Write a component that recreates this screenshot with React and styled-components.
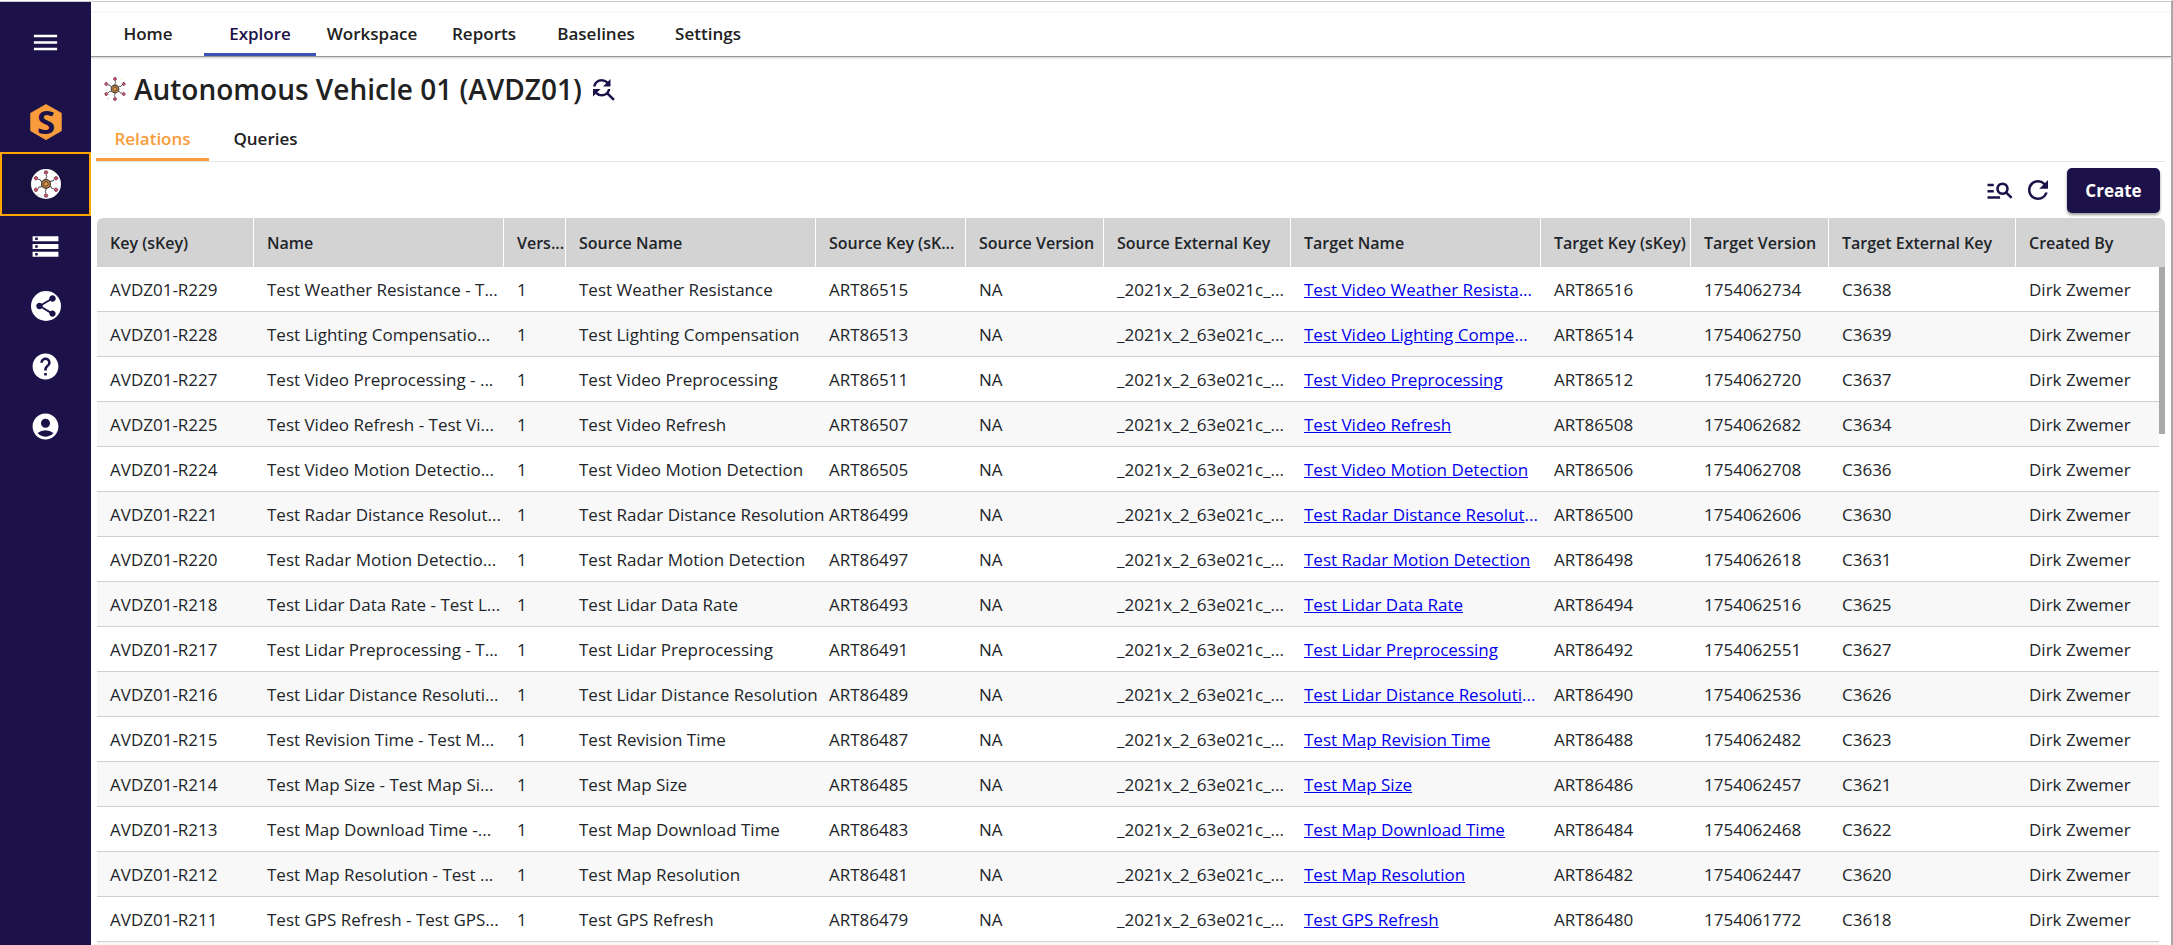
import styled, { createGlobalStyle } from "styled-components";
import {
  MdAccountCircle,
  MdFindReplace,
  MdHelp,
  MdManageSearch,
  MdMenu,
  MdRefresh,
  MdShare,
  MdStorage,
} from "react-icons/md";

const navy = "#1c1249";
const orange = "#f89c3c";

const GlobalStyle = createGlobalStyle`
  * {
    box-sizing: border-box;
  }
  body {
    margin: 0;
    background-color: white;
    color: #212529;
    font-family: "Segoe UI", "Open Sans", "Noto Sans", sans-serif;
    font-size: 17px;
  }
`;

const Container = styled.div`
  display: flex;
  height: 100vh;
  overflow: hidden;
  border-top: 1px solid white;
  border-right: 2px solid #a8a8a8;
`;

const Sidebar = styled.aside`
  width: 91px;
  flex-shrink: 0;
  display: flex;
  flex-direction: column;
  align-items: center;
  border-top: 1px solid #ccc;
  background-color: ${navy};
`;

const MenuButton = styled.button`
  width: 100%;
  height: 80px;
  display: flex;
  align-items: center;
  justify-content: center;
  border: none;
  background: none;
  color: white;
  cursor: pointer;
`;

const SideLinks = styled.nav`
  width: 100%;
  margin-top: 10px;
`;

const SideLink = styled.a`
  height: ${(props) => (props.$active ? "64px" : "60px")};
  display: flex;
  align-items: center;
  justify-content: center;
  color: white;
  background-color: ${(props) => (props.$active ? "#19113f" : "transparent")};
  border: 2px solid ${(props) => (props.$active ? "orange" : "transparent")};
`;

const Badge = styled.span`
  width: 30px;
  height: 30px;
  display: flex;
  align-items: center;
  justify-content: center;
  border-radius: 50%;
  background-color: white;
  color: ${navy};
`;

const Main = styled.main`
  flex: 1;
  min-width: 0;
  display: flex;
  flex-direction: column;
  border-top: 1px solid #ccc;
`;

const TopNav = styled.nav`
  display: flex;
  margin-top: 10px;
  height: 45px;
  padding-left: 1px;
  border-top: 1px solid #f6f6f6;
  border-bottom: 1px solid #999;
  box-shadow: 0 1px 2px rgba(0, 0, 0, 0.2);
`;

const TopLink = styled.a`
  min-width: 112px;
  padding: 0 10px;
  display: flex;
  align-items: center;
  justify-content: center;
  font-weight: 600;
  text-decoration: none;
  color: ${(props) => (props.$active ? navy : "#212121")};
  border-bottom: 3px solid
    ${(props) => (props.$active ? "#3f51b5" : "transparent")};
`;

const TitleRow = styled.div`
  height: 66px;
  display: flex;
  align-items: center;
  gap: 6px;
  padding: 0 0 2px 11px;
`;

const Title = styled.h1`
  margin: 0;
  font-size: 28px;
  line-height: 40px;
  font-weight: 600;
  color: #212121;
`;

const IconButton = styled.button`
  display: flex;
  padding: 0;
  border: none;
  background: none;
  color: ${navy};
  cursor: pointer;
`;

const Tabs = styled.div`
  display: flex;
  height: 39px;
  margin: 0 6px 0 5px;
  border-bottom: 1px solid #e6e6e6;
`;

const Tab = styled.button`
  min-width: 113px;
  padding: 0 0 4px;
  border: none;
  border-bottom: 3px solid
    ${(props) => (props.$active ? orange : "transparent")};
  background: none;
  color: ${(props) => (props.$active ? orange : "#212121")};
  font: inherit;
  font-weight: 600;
  cursor: pointer;
`;

const Toolbar = styled.div`
  display: flex;
  align-items: center;
  justify-content: flex-end;
  gap: 8px;
  height: 56px;
  padding-right: 11px;
`;

const CreateButton = styled.button`
  width: 93px;
  height: 45px;
  margin-left: 6px;
  border: none;
  border-radius: 5px;
  background-color: ${navy};
  color: white;
  font: inherit;
  font-weight: 700;
  box-shadow: 0 2px 3px rgba(0, 0, 0, 0.4);
  cursor: pointer;
`;

const TablePanel = styled.section`
  flex: 1;
  min-height: 0;
  position: relative;
  overflow: hidden;
  margin: 0 6px;
  border-radius: 6px 6px 0 0;
  background-color: #f8f8f8;
`;

const Table = styled.table`
  width: 100%;
  table-layout: fixed;
  border-collapse: separate;
  border-spacing: 0;
`;

const Th = styled.th`
  width: ${(props) => props.$width};
  height: 49px;
  padding: 0 0 0 13px;
  white-space: nowrap;
  text-align: left;
  font-size: 16px;
  font-weight: 600;
  background-color: #d3d3d3;
  border-right: 1px solid white;
  &:last-child {
    border-right: none;
  }
`;

const Tr = styled.tr`
  background-color: white;
  &:nth-child(even) {
    background-color: #f8f8f8;
  }
`;

const Td = styled.td`
  height: 45px;
  padding: 0 0 0 13px;
  white-space: nowrap;
  border-bottom: 1px solid #d0d0d0;
`;

const TableLink = styled.a`
  color: #0000ee;
`;

const LinkCell = styled(Td)`
  color: #0000ee;
`;

const ScrollTrack = styled.div`
  position: absolute;
  top: 49px;
  right: 0;
  bottom: 0;
  width: 6px;
  background-color: white;
`;

const ScrollThumb = styled.div`
  height: 167px;
  background-color: #a8a8a8;
`;

const spokes = [0, 60, 120, 180, 240, 300];

const HubIcon = ({ size }) => (
  <svg width={size} height={size} viewBox="0 0 30 30" aria-hidden="true">
    {spokes.map((angle) => (
      <g key={angle} transform={`rotate(${angle} 15 15)`}>
        <path d="M15 11V9l.8-1.4-.8-2" stroke="#4a4a55" strokeWidth="1" fill="none" />
        <circle cx="15" cy="3.4" r="1.7" fill="#d9536f" stroke="#5f3340" strokeWidth="0.8" />
      </g>
    ))}
    <circle cx="15" cy="15" r="4.4" fill="#b98a55" stroke="#4d3a2a" strokeWidth="1.3" />
    <circle cx="15" cy="15" r="2.2" fill="#f0a050" stroke="#5b3d22" strokeWidth="1" />
    <circle cx="22.5" cy="3.8" r="0.6" fill="#f8d66a" />
    <circle cx="25" cy="14.6" r="0.5" fill="#f2a6a6" />
    <circle cx="7" cy="26" r="0.8" fill="#8ee07c" />
  </svg>
);

const LogoSvg = styled.svg`
  overflow: visible;
`;

const LogoLetter = styled.text`
  font-size: 33px;
  font-weight: 700;
  fill: ${navy};
`;

const LogoIcon = () => (
  <LogoSvg width="32" height="36" viewBox="0 0 32 36" aria-hidden="true">
    <path
      d="M16 0.6L31.2 9.2V26.8L16 35.6L0.8 26.8V9.2Z"
      fill={orange}
      stroke={orange}
      strokeLinejoin="round"
    />
    <LogoLetter x="16" y="30" textAnchor="middle">
      S
    </LogoLetter>
  </LogoSvg>
);

const topLinks = ["Home", "Explore", "Workspace", "Reports", "Baselines", "Settings"];

const columns = [
  { label: "Key (sKey)", width: "157px" },
  { label: "Name", width: "250px" },
  { label: "Vers...", width: "62px" },
  { label: "Source Name", width: "250px" },
  { label: "Source Key (sK...", width: "150px" },
  { label: "Source Version", width: "138px" },
  { label: "Source External Key", width: "187px" },
  { label: "Target Name", width: "250px" },
  { label: "Target Key (sKey)", width: "150px" },
  { label: "Target Version", width: "138px" },
  { label: "Target External Key", width: "187px" },
  { label: "Created By", width: "auto" },
];

// key, name, source name, source art no., target name, target version, target external key
const relations = [
  ["R229", "Test Weather Resistance - T...", "Test Weather Resistance", 86515, "Test Video Weather Resista...", "1754062734", "C3638"],
  ["R228", "Test Lighting Compensatio...", "Test Lighting Compensation", 86513, "Test Video Lighting Compe...", "1754062750", "C3639"],
  ["R227", "Test Video Preprocessing - ...", "Test Video Preprocessing", 86511, "Test Video Preprocessing", "1754062720", "C3637"],
  ["R225", "Test Video Refresh - Test Vi...", "Test Video Refresh", 86507, "Test Video Refresh", "1754062682", "C3634"],
  ["R224", "Test Video Motion Detectio...", "Test Video Motion Detection", 86505, "Test Video Motion Detection", "1754062708", "C3636"],
  ["R221", "Test Radar Distance Resolut...", "Test Radar Distance Resolution", 86499, "Test Radar Distance Resolut...", "1754062606", "C3630"],
  ["R220", "Test Radar Motion Detectio...", "Test Radar Motion Detection", 86497, "Test Radar Motion Detection", "1754062618", "C3631"],
  ["R218", "Test Lidar Data Rate - Test L...", "Test Lidar Data Rate", 86493, "Test Lidar Data Rate", "1754062516", "C3625"],
  ["R217", "Test Lidar Preprocessing - T...", "Test Lidar Preprocessing", 86491, "Test Lidar Preprocessing", "1754062551", "C3627"],
  ["R216", "Test Lidar Distance Resoluti...", "Test Lidar Distance Resolution", 86489, "Test Lidar Distance Resoluti...", "1754062536", "C3626"],
  ["R215", "Test Revision Time - Test M...", "Test Revision Time", 86487, "Test Map Revision Time", "1754062482", "C3623"],
  ["R214", "Test Map Size - Test Map Si...", "Test Map Size", 86485, "Test Map Size", "1754062457", "C3621"],
  ["R213", "Test Map Download Time -...", "Test Map Download Time", 86483, "Test Map Download Time", "1754062468", "C3622"],
  ["R212", "Test Map Resolution - Test ...", "Test Map Resolution", 86481, "Test Map Resolution", "1754062447", "C3620"],
  ["R211", "Test GPS Refresh - Test GPS...", "Test GPS Refresh", 86479, "Test GPS Refresh", "1754061772", "C3618"],
];

const App = () => {
  return (
    <>
      <GlobalStyle />
      <Container>
        <Sidebar>
          <MenuButton aria-label="Menu">
            <MdMenu size={31} />
          </MenuButton>
          <SideLinks>
            <SideLink href="#" aria-label="Start">
              <LogoIcon />
            </SideLink>
            <SideLink href="#" aria-label="Network" $active>
              <Badge>
                <HubIcon size={30} />
              </Badge>
            </SideLink>
            <SideLink href="#" aria-label="Repositories">
              <MdStorage size={31} />
            </SideLink>
            <SideLink href="#" aria-label="Share">
              <Badge>
                <MdShare size={26} />
              </Badge>
            </SideLink>
            <SideLink href="#" aria-label="Help">
              <MdHelp size={31} />
            </SideLink>
            <SideLink href="#" aria-label="Account">
              <MdAccountCircle size={31} />
            </SideLink>
          </SideLinks>
        </Sidebar>
        <Main>
          <TopNav>
            {topLinks.map((label) => (
              <TopLink href="#" key={label} $active={label === "Explore"}>
                {label}
              </TopLink>
            ))}
          </TopNav>
          <TitleRow>
            <HubIcon size={26} />
            <Title>Autonomous Vehicle 01 (AVDZ01)</Title>
            <IconButton aria-label="Find and replace">
              <MdFindReplace size={30} />
            </IconButton>
          </TitleRow>
          <Tabs role="tablist">
            <Tab role="tab" aria-selected="true" $active>
              Relations
            </Tab>
            <Tab role="tab" aria-selected="false">
              Queries
            </Tab>
          </Tabs>
          <Toolbar>
            <IconButton aria-label="Search">
              <MdManageSearch size={30} />
            </IconButton>
            <IconButton aria-label="Refresh">
              <MdRefresh size={30} />
            </IconButton>
            <CreateButton>Create</CreateButton>
          </Toolbar>
          <TablePanel>
            <Table>
              <thead>
                <tr>
                  {columns.map(({ label, width }) => (
                    <Th key={label} scope="col" $width={width}>
                      {label}
                    </Th>
                  ))}
                </tr>
              </thead>
              <tbody>
                {relations.map(([key, name, source, art, target, version, external]) => (
                  <Tr key={key}>
                    <Td>AVDZ01-{key}</Td>
                    <Td>{name}</Td>
                    <Td>1</Td>
                    <Td>{source}</Td>
                    <Td>ART{art}</Td>
                    <Td>NA</Td>
                    <Td>_2021x_2_63e021c_...</Td>
                    <LinkCell>
                      <TableLink href="#">{target.replace("...", "")}</TableLink>
                      {target.endsWith("...") && "..."}
                    </LinkCell>
                    <Td>ART{art + 1}</Td>
                    <Td>{version}</Td>
                    <Td>{external}</Td>
                    <Td>Dirk Zwemer</Td>
                  </Tr>
                ))}
              </tbody>
            </Table>
            <ScrollTrack>
              <ScrollThumb />
            </ScrollTrack>
          </TablePanel>
        </Main>
      </Container>
    </>
  );
};

export default App;
